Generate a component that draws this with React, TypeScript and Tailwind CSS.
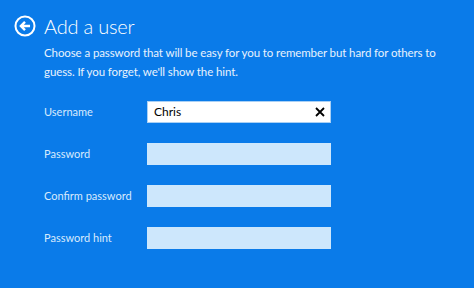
import React from 'react'

const rows = [
  { label: 'Username', value: 'Chris' },
  { label: 'Password' },
  { label: 'Confirm password' },
  { label: 'Password hint' },
]

export default function App() {
  return (
    <div
      className="w-[474px] h-[288px] bg-[#0a7be9] text-white overflow-hidden"
      style={{ fontFamily: 'Lato, "Open Sans", sans-serif' }}
    >
      <div className="flex items-center pt-[14px] pl-[14px] gap-[8px]">
        <svg width="22" height="22" viewBox="0 0 24 24" fill="none" stroke="white" strokeWidth="2.2">
          <circle cx="12" cy="12" r="10.4" />
          <path d="M17.5 12H7.5M12 7.5L7.5 12l4.5 4.5" strokeWidth="2.6" />
        </svg>
        <h1 className="text-[20px] font-light leading-[24px] tracking-[-0.2px]">Add a user</h1>
      </div>
      <p className="ml-[44px] mt-[5px] w-[392px] text-[11.5px] leading-[19px] text-[#e8f2fd] tracking-[-0.1px]">
        Choose a password that will be easy for you to remember but hard for others to guess. If you forget, we'll show the hint.
      </p>
      <div className="mt-[20px] flex flex-col gap-[20px]">
        {rows.map((r) => (
          <div key={r.label} className="flex items-center">
            <span className="w-[147px] shrink-0 pl-[44px] text-[11px] text-[#d8eafd] whitespace-nowrap">
              {r.label}
            </span>
            {r.value ? (
              <div className="w-[184px] h-[22px] bg-white border border-[#a9d0f5] flex items-center justify-between pl-[6px] pr-[5px]">
                <span className="text-[12px] text-black">{r.value}</span>
                <svg width="10" height="10" viewBox="0 0 10 10" stroke="black" strokeWidth="1.8">
                  <path d="M1 1L9 9M9 1L1 9" />
                </svg>
              </div>
            ) : (
              <div className="w-[184px] h-[22px] bg-[#cde7fc]" />
            )}
          </div>
        ))}
      </div>
    </div>
  )
}
